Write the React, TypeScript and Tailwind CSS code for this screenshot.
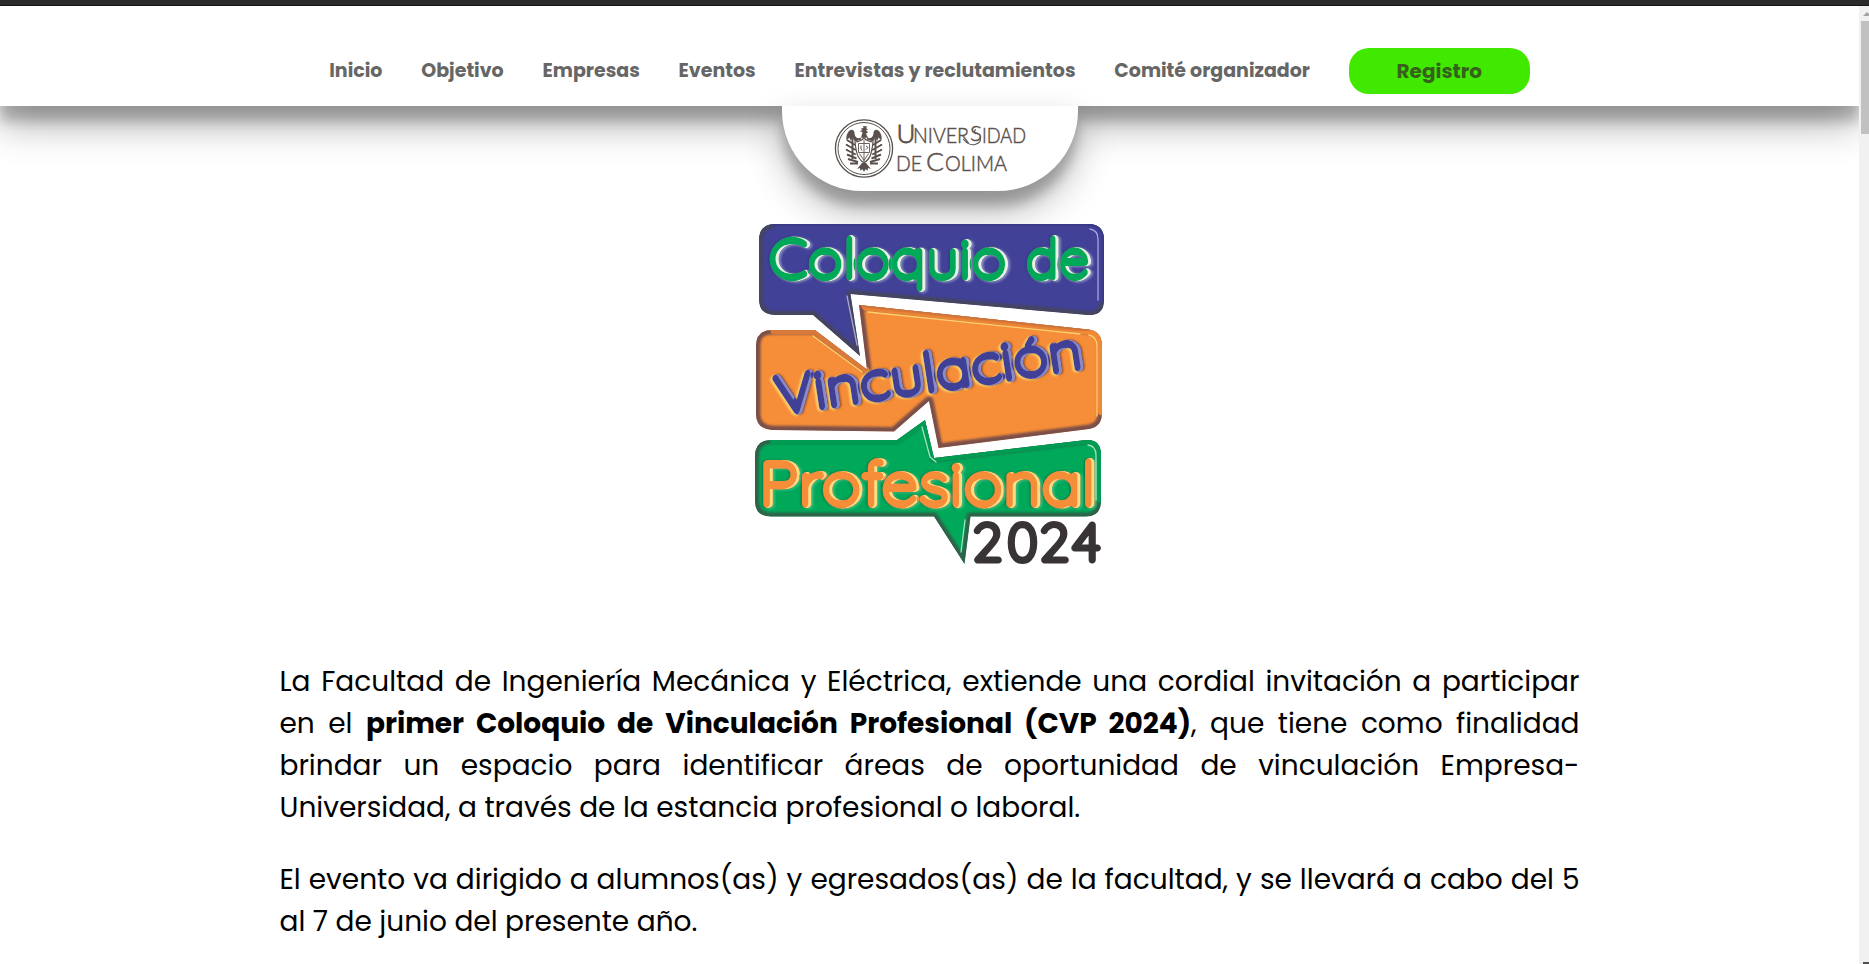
import React from "react";

const navItems = ["Inicio", "Objetivo", "Empresas", "Eventos", "Entrevistas y reclutamientos", "Comité organizador"];

const SHADOW = "shadow-[0_19px_38px_rgba(0,0,0,0.3),0_15px_12px_rgba(0,0,0,0.22)]";

function Emblem() {
  return (
    <svg viewBox="0 0 60 60" className="h-[60px] w-[60px] shrink-0" fill="none" stroke="#5b514c">
      <circle cx="30" cy="30.500" r="28.6" strokeWidth="1.3" />
      <circle cx="30" cy="30.500" r="26" strokeWidth="1" />
      <g fill="#5b514c" stroke="none">
        <path d="M29 8l4.500.4-1.500 1.600 2 1.500-2 .8 2 2-2 1.500 2 4h-7l1.500-5.500-3-1.300 3-.8-1.600-1.600 2.600-.6z" />
        <path d="M27 19.500c-4 2-6.500-1-6.500-5-1-4-5-3-6.500 0-1.500 2-2 5-1.500 8l3-3 1 3 2.500-2 2 3 6-2z" />
        <path d="M33 19.500c4 2 6.500-1 6.500-5 1-4 5-3 6.500 0 1.500 2 2 5 1.500 8l-3-3-1 3-2.500-2-2 3-6-2z" />
        <path d="M28 45h4l5 6-3-1-.4 2.700-2.100-1.400L30 54l-1.500-2.700-2.100 1.400L26 50l-3 1z" />
      </g>
      <g strokeWidth="1.900">
        <path d="M13 22l8 5M12.800 26v1l9 5M12.800 31v1l9 4.500M13 36.500l9.500 4M14 41l10 3M16 45.500l8 0M18.500 21v20" />
        <path d="M47 22l-8 5M47.200 26v1l-9 5M47.200 31v1l-9 4.500M47 36.500l-9.500 4M46 41l-10 3M44 45.500l-8 0M41.500 21v20" />
      </g>
      <path d="M21 24q5.500-.5 9-4 3.500 3.500 9 4-.5 5-1.500 9.500-1.500 7.500-7.500 11.500-6-4-7.500-11.500-1-4.500-1.500-9.500z" fill="#fff" strokeWidth="1.200" />
      <path d="M24.500 25.500h11v9h-11zM30 22v22M25.500 35.500l4.500 7 4.500-7" strokeWidth=".9" />
      <path d="M27 27.500v3l1 2M32 28l2 1.500-2 2" strokeWidth="1" />
    </svg>
  );
}

function UniversityMark() {
  return (
    <div className="flex items-center pl-px">
      <Emblem />
      <svg viewBox="0 0 130 60" className="ml-[3px] h-[60px] w-[130px] overflow-visible" fill="#5b514c" stroke="#5b514c" strokeWidth=".5" fontFamily="Lato, sans-serif" fontWeight="300">
        <text x="-.5" y="24.500" fontSize="26" strokeWidth=".8">U</text>
        <text x="16" y="24.500" fontSize="21.500" textLength="56" lengthAdjust="spacingAndGlyphs">NIVER</text>
        <text x="73" y="22.500" fontSize="21" textLength="12" lengthAdjust="spacingAndGlyphs">S</text>
        <text x="85" y="24.500" fontSize="21.500" textLength="44" lengthAdjust="spacingAndGlyphs">IDAD</text>
        <path d="M66 21q6 7 12 5.500 7-2 5-7.500M79 16q-3-3 0-4.500" fill="none" strokeWidth="1.100" />
        <text x="-1" y="52.500" fontSize="21.500" textLength="26" lengthAdjust="spacingAndGlyphs">DE</text>
        <text x="29" y="52.500" fontSize="26" textLength="18" lengthAdjust="spacingAndGlyphs">C</text>
        <text x="48" y="52.500" fontSize="21.500" textLength="62" lengthAdjust="spacingAndGlyphs">OLIMA</text>
      </svg>
    </div>
  );
}

const PURPLE = "M775 224H1088Q1104 224 1104 240V300Q1104 316 1088 315L850.500 294 860 356 813 315H775Q759 315 759 299V240Q759 224 775 224Z";
const ORANGE = "M772 330H815L867 369.500 859 305 1088 329.500Q1102 331 1102 346V413Q1102 427 1089 429L938.500 448 929 401 894 431.500 772 430Q756 429 756 414V346Q756 330 772 330Z";
const GREEN = "M771 440H897L925 420 934 458 1086 440Q1101 439 1101 455V501Q1101 516.500 1086 516.500H970.500L964.500 564 934 516.500H771Q755 516.500 755 501V456Q755 440 771 440Z";

/* Embossed look: a dark halo, a light halo and a glint on the inner right edge. */
function Emboss({ id, light, dark, glint, lx = 1.5, dx = -1 }: { id: string; light: string; dark: string; glint: string; lx?: number; dx?: number }) {
  return (
    <filter id={id} x="-5%" y="-20%" width="110%" height="140%">
      <feGaussianBlur in="SourceAlpha" stdDeviation="1.300" result="b" />
      <feOffset in="b" dx={lx} dy="0.800" result="lo" />
      <feFlood floodColor={light} />
      <feComposite in2="lo" operator="in" result="lightHalo" />
      <feOffset in="b" dx={dx} dy="-0.300" result="do" />
      <feFlood floodColor={dark} />
      <feComposite in2="do" operator="in" result="darkHalo" />
      <feOffset in="SourceAlpha" dx="-3.200" dy="-0.300" result="in1" />
      <feComposite in="SourceAlpha" in2="in1" operator="out" result="edge" />
      <feGaussianBlur in="edge" stdDeviation="0.700" result="edgeBlur" />
      <feFlood floodColor={glint} />
      <feComposite in2="edgeBlur" operator="in" result="g1" />
      <feComposite in="g1" in2="SourceAlpha" operator="in" result="g2" />
      <feMerge>
        <feMergeNode in="lightHalo" />
        <feMergeNode in="darkHalo" />
        <feMergeNode in="SourceGraphic" />
        <feMergeNode in="g2" />
      </feMerge>
    </filter>
  );
}

function EventLogo() {
  return (
    <svg
      viewBox="750 218 360 352"
      className="h-[352px] w-[360px] overflow-visible"
      fontFamily="Quicksand, Poppins, sans-serif"
      fontWeight="300"
      strokeLinejoin="round"
      strokeLinecap="round"
    >
      <defs>
        <Emboss id="embossGreen" light="rgba(225,225,255,0.45)" dark="rgba(45,45,120,0.5)" glint="rgba(255,255,255,0.8)" />
        <Emboss id="embossBlue" lx={-2.500} dx={1.200} light="rgba(255,226,120,0.9)" dark="rgba(110,55,40,0.85)" glint="rgba(190,190,245,0.45)" />
        <Emboss id="embossOrange" light="rgba(190,245,205,0.3)" dark="rgba(20,90,50,0.7)" glint="rgba(255,232,140,0.85)" />
        <filter id="soft" x="-5%" y="-5%" width="110%" height="110%">
          <feGaussianBlur stdDeviation="1.300" />
        </filter>
        <clipPath id="cp"><path d={PURPLE} /></clipPath>
        <clipPath id="co"><path d={ORANGE} /></clipPath>
        <clipPath id="cg"><path d={GREEN} /></clipPath>
      </defs>

      <g clipPath="url(#cp)">
        <path d={PURPLE} fill="#414197" />
        <path d={PURPLE} fill="none" stroke="#45455f" strokeWidth="8" filter="url(#soft)" />
        <path d="M779 226H1088Q1101 226 1101 240V298" fill="none" stroke="#414197" strokeWidth="9" />
        <path d="M773 224H1088Q1104 224 1104 240V300" fill="none" stroke="#393985" strokeWidth="4" filter="url(#soft)" />
        <path d="M1090 229Q1098 230 1098 240V300M847 296L857 345" fill="none" stroke="#a5a5dc" strokeWidth="1.300" />
      </g>
      <g clipPath="url(#co)">
        <path d={ORANGE} fill="#f68d38" />
        <path d={ORANGE} fill="none" stroke="#7b5048" strokeWidth="9" filter="url(#soft)" />
        <path d="M866 306L1088 330Q1102 332 1102 346V411" fill="none" stroke="#f08835" strokeWidth="9" />
        <path d="M863 305L1088 329" fill="none" stroke="#c9703a" strokeWidth="5" filter="url(#soft)" />
        <path d="M774 331H815L866 370" fill="none" stroke="#d97a3a" strokeWidth="7" />
        <path d="M1089 335Q1097 337 1097 346V416M813 336L862 372M868 312L1080 334" fill="none" stroke="#ffd070" strokeWidth="1.300" />
      </g>
      <g clipPath="url(#cg)">
        <path d={GREEN} fill="#00a85a" />
        <path d={GREEN} fill="none" stroke="#2f6248" strokeWidth="8" filter="url(#soft)" />
        <path d="M774 441H897L925 420 934 458 1086 440Q1101 439 1101 455V499" fill="none" stroke="#009b53" strokeWidth="8" />
        <path d="M1088 445Q1096 446 1096 455V500M922 427L930 457 936 462M965 520L961 552" fill="none" stroke="#9be5bd" strokeWidth="1.300" />
      </g>

      <g filter="url(#embossGreen)" fill="#00a85a" stroke="#00a85a" strokeWidth="6" fontSize="55">
        <text x="770" y="277.500" textLength="238" lengthAdjust="spacingAndGlyphs">Coloquio</text>
        <text x="1027" y="277.500" textLength="64" lengthAdjust="spacingAndGlyphs">de</text>
      </g>
      <g filter="url(#embossBlue)" fill="#414197" stroke="#414197" strokeWidth="6" fontSize="53">
        <text transform="translate(779 414.500) rotate(-8.700)" x="0" y="0" textLength="310" lengthAdjust="spacingAndGlyphs">Vinculación</text>
      </g>
      <g filter="url(#embossOrange)" fill="#f68d38" stroke="#f68d38" strokeWidth="6" fontSize="60">
        <text x="760" y="505" textLength="337" lengthAdjust="spacingAndGlyphs">Profesional</text>
      </g>
      <g fill="#383436" stroke="#383436" strokeWidth="5" fontSize="53">
        <text x="973" y="561" textLength="29" lengthAdjust="spacingAndGlyphs">2</text>
        <text x="1007" y="561" textLength="31" lengthAdjust="spacingAndGlyphs">0</text>
        <text x="1040" y="561" textLength="29" lengthAdjust="spacingAndGlyphs">2</text>
        <text x="1073" y="561" textLength="27" lengthAdjust="spacingAndGlyphs">4</text>
      </g>
    </svg>
  );
}

export default function App() {
  return (
    <div className="flex h-[964px] w-full flex-col overflow-hidden bg-white font-[Poppins,Inter,sans-serif]">
      <div className="h-[6px] shrink-0 border-b border-[#1a141a] bg-[#2b2b2b]" />
      <div className="flex min-h-0 flex-1">
        <div className="flex min-w-0 flex-1 flex-col overflow-hidden">
          <header className={`flex h-[100px] shrink-0 items-start justify-center bg-white pt-[42px] ${SHADOW}`}>
            <nav className="flex h-[46px] items-center gap-[38.800px] text-[19px] font-bold text-[#666]">
              {navItems.map((label) => (
                <a key={label} className="whitespace-nowrap">{label}</a>
              ))}
              <button className="flex h-[46px] w-[181px] items-center justify-center rounded-[20px] bg-[#41e800] text-[20px] text-[#36611c]">
                Registro
              </button>
            </nav>
          </header>
          <div className={`flex h-[85px] w-[296px] shrink-0 items-start justify-center self-center rounded-b-[80px] bg-white pt-[12px] ${SHADOW}`}>
            <UniversityMark />
          </div>
          <main className="flex flex-col items-center">
            <div className="mt-[27px]">
              <EventLogo />
            </div>
            <div className="mt-[91px] w-[1300px] text-justify text-[28px] leading-[42px] text-black">
              <p className="mb-[30px]">
                La Facultad de Ingeniería Mecánica y Eléctrica, extiende una cordial invitación a participar en el{" "}
                <b>primer Coloquio de Vinculación Profesional (CVP 2024)</b>, que tiene como finalidad brindar un espacio
                para identificar áreas de oportunidad de vinculación Empresa-Universidad, a través de la estancia
                profesional o laboral.
              </p>
              <p>
                El evento va dirigido a alumnos(as) y egresados(as) de la facultad, y se llevará a cabo del 5 al 7 de
                junio del presente año.
              </p>
            </div>
          </main>
        </div>
        <div className="flex w-[10px] shrink-0 flex-col overflow-hidden bg-[#f1f1f1] pl-[2px] pt-[6px]">
          <svg className="h-[4px] w-[14px] shrink-0" viewBox="0 0 14 4"><path d="M2 4L6 0L10 4Z" fill="#a3a3a3" /></svg>
          <div className="mt-[5px] h-[113px] shrink-0 bg-[#c1c1c1]" />
          <div className="ml-[2px] mt-auto h-[2px] shrink-0 bg-[#505050]" />
        </div>
      </div>
    </div>
  );
}
